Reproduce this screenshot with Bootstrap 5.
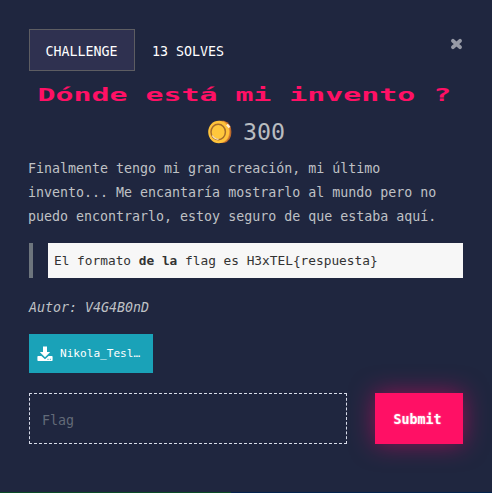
<!DOCTYPE html>
<html lang="es">
<head>
<meta charset="utf-8">
<meta name="viewport" content="width=device-width, initial-scale=1">
<title>Challenge</title>
<link href="https://cdn.jsdelivr.net/npm/bootstrap@5.3.0/dist/css/bootstrap.min.css" rel="stylesheet">
<style>
  body { background: #1f263f; color: #bfc1c5; font: 13.3px/24px "DejaVu Sans Mono", "Liberation Mono", monospace; overflow: hidden; }
  .challenge { height: 492px; padding: 29px 29px 0 29px; }
  .challenge-tab { height: 42px; width: 106px; background: #2f3150; border: 1px solid #5d5d62; color: #fff; padding: 3px 1px 0 0; }
  .solves-tab { color: #fff; margin-left: 17px; padding-top: 3px; }
  .close-x { margin: 9px 0 0 auto; width: 13px; height: 12px; }
  .challenge-title { width: 250px; font-size: 18px; font-weight: 700; line-height: 24px; color: #ff1065; margin: 12px 0 0 -2px; white-space: nowrap; transform: scaleX(1.66); }
  .points { font-size: 23.3px; line-height: 30px; margin-top: 10px; gap: 10px; color: #b9bcc0; }
  .description { margin: 10px 0 0 -1px; }
  .hint { margin-top: 14px; height: 35px; border-left: 4px solid #6d757d; padding-left: 15px; }
  .hint-code { background: #f7f7f7; color: #333; font-size: 12.8px; padding-left: 6px; }
  .author { margin-top: 18px; }
  .file-btn { width: 124px; height: 39px; margin-top: 14px; background: #1aa2b8; color: #fff; font-size: 11.1px; padding-left: 8px; gap: 7px; }
  .file-name { padding-top: 1px; }
  .answer-row { margin-top: 20px; gap: 28px; }
  .flag-input, .flag-input:focus { width: 318px; height: 51px; background: transparent; border: 1px dashed #d8dcea; border-radius: 0; font-size: 13.3px; padding: 4px 12px 0; color: #fff; box-shadow: none; }
  .flag-input::placeholder { color: #626a78; }
  .submit-btn { width: 88px; height: 51px; background: #ff1065; border: 0; color: #fff; font-size: 13.3px; font-weight: 700; padding: 2px 3px 0 0; box-shadow: 0 0 24px rgba(255,0,110,.5); text-shadow: 0 0 2px rgba(255,255,255,.5); }
  .page-edge { height: 1px; background: linear-gradient(90deg, #0a4a28 231px, #04234c 231px); }
</style>
</head>
<body>
<main class="challenge d-flex flex-column">
  <div class="d-flex">
    <div class="challenge-tab d-flex align-items-center justify-content-center flex-shrink-0">CHALLENGE</div>
    <div class="solves-tab d-flex align-items-center">13 SOLVES</div>
    <svg class="close-x" viewBox="0 0 13 12" role="img" aria-label="Cerrar"><path d="M3 2.9 10 9.1M10 2.9 3 9.1" stroke="#9699a5" stroke-width="3.9" stroke-linecap="round"/></svg>
  </div>
  <h1 class="challenge-title align-self-center">Dónde está mi invento ?</h1>
  <div class="points d-flex align-items-center justify-content-center">
    <svg width="26" height="26" viewBox="0 0 26 26" aria-hidden="true">
      <path d="M12 1.8h5Q24.4 4 24.4 13T17 24h-5z" fill="#bd6a2b"/>
      <path d="M16 2q7 2 7 10.5T17 23" fill="#e8933a"/>
      <ellipse cx="11.7" cy="13" rx="10.5" ry="11.3" fill="#ffc33b"/>
      <ellipse cx="11.2" cy="13" rx="7.2" ry="7.7" fill="#ffc73c" stroke="#a66d2c" stroke-width="1.5"/>
      <path d="M5.3 16.5Q7.5 20.4 11.5 20.3" fill="none" stroke="#f6e3c0" stroke-width="1.3"/>
      <path d="m20 5.5 2.5 3" stroke="#fff0dc" stroke-width="2.2"/>
    </svg>
    <span>300</span>
  </div>
  <div class="description">Finalmente tengo mi gran creación, mi último<br>invento... Me encantaría mostrarlo al mundo pero no<br>puedo encontrarlo, estoy seguro de que estaba aquí.</div>
  <div class="hint d-flex"><div class="hint-code flex-fill d-flex align-items-center"><span>El formato <b>de</b> <b>la</b> flag es H3xTEL{respuesta}</span></div></div>
  <div class="author fst-italic">Autor: V4G4B0nD</div>
  <a class="file-btn d-flex align-items-center text-decoration-none" href="#">
    <svg width="16" height="16" viewBox="0 0 16 16" aria-hidden="true"><path d="M6 .5h4V6h3.2L8 11.3 2.8 6H6z" fill="#fff"/><path d="M1.2 10h3.2L8 13.3 11.6 10h3.2q.8 0 .8.8v3.4q0 .8-.8.8H1.2q-.8 0-.8-.8v-3.4q0-.8.8-.8z" fill="#fff"/><path d="M10.5 13.3h1M12.8 13.3h1" stroke="#1aa2b8"/></svg>
    <span class="file-name">Nikola_Tesl…</span>
  </a>
  <form class="answer-row d-flex">
    <input class="flag-input form-control flex-shrink-0" type="text" placeholder="Flag" aria-label="Flag">
    <button class="submit-btn btn rounded-0" type="button">Submit</button>
  </form>
</main>
<footer class="page-edge"></footer>
</body>
</html>
